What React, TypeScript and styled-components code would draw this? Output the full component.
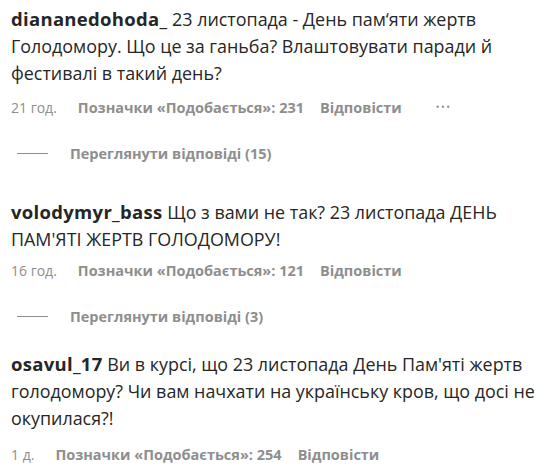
import styled, { createGlobalStyle } from "styled-components"

const GlobalStyle = createGlobalStyle`
  body {
    margin: 0;
    background: #ffffff;
    font-family: "Open Sans", "Noto Sans", sans-serif;
    color: #262626;
  }
`

type commentType = {
  id: number
  user: string
  text: string
  time: string
  likes: number
  replies?: number
  more?: boolean
  metaGap: number
  after: number
}

const comments: commentType[] = [
  {
    id: 1,
    user: "diananedohoda_",
    text: "23 листопада - День пам\u2018яти жертв Голодомору. Що це за ганьба? Влаштовувати паради й фестивалі в такий день?",
    time: "21 год.",
    likes: 231,
    replies: 15,
    more: true,
    metaGap: 10,
    after: 35,
  },
  {
    id: 2,
    user: "volodymyr_bass",
    text: "Що з вами не так? 23 листопада ДЕНЬ ПАМ'ЯТІ ЖЕРТВ ГОЛОДОМОРУ!",
    time: "16 год.",
    likes: 121,
    replies: 3,
    metaGap: 7,
    after: 24,
  },
  {
    id: 3,
    user: "osavul_17",
    text: "Ви в курсі, що 23 листопада День Пам'яті жертв голодомору? Чи вам начхати на українську кров, що досі не окупилася?!",
    time: "1 д.",
    likes: 254,
    metaGap: 12,
    after: 0,
  },
]

const App = () => {
  return (
    <>
      <GlobalStyle />
      <CommentList>
        {comments.map(comment => (
          <Comment key={comment.id} $after={comment.after}>
            <CommentText>
              <UserName>{comment.user}</UserName> {comment.text}
            </CommentText>
            <MetaRow $gap={comment.metaGap}>
              <Time>{comment.time}</Time>
              <MetaButton>Позначки «Подобається»: {comment.likes}</MetaButton>
              <MetaButton>Відповісти</MetaButton>
              {comment.more && <MoreDots>•••</MoreDots>}
            </MetaRow>
            {comment.replies && (
              <RepliesRow>
                <RepliesLine />
                <MetaButton>Переглянути відповіді ({comment.replies})</MetaButton>
              </RepliesRow>
            )}
          </Comment>
        ))}
      </CommentList>
    </>
  )
}

export default App

const CommentList = styled.div`
  width: 559px;
  display: flex;
  flex-direction: column;
  padding: 5px 0 0 11px;
  box-sizing: border-box;
`

const Comment = styled.div<{ $after: number }>`
  display: flex;
  flex-direction: column;
  margin-bottom: ${p => p.$after}px;
`

const CommentText = styled.div`
  font-size: 17.9px;
  line-height: 27px;
  width: 535px;
  color: #262626;
`

const UserName = styled.span`
  font-weight: 700;
  font-size: 18.5px;
  letter-spacing: 0.3px;
`

const MetaRow = styled.div<{ $gap: number }>`
  display: flex;
  align-items: center;
  gap: 16px;
  margin-top: ${p => p.$gap}px;
  height: 20px;
  color: #8e8e8e;
`

const Time = styled.span`
  font-size: 14px;
  font-weight: 400;
  margin-right: 5px;
`

const MetaButton = styled.span`
  font-size: 14.5px;
  font-weight: 700;
  color: #8e8e8e;
`

const MoreDots = styled.span`
  font-size: 10px;
  letter-spacing: 1.5px;
  margin-left: 18px;
  color: #8e8e8e;
`

const RepliesRow = styled.div`
  display: flex;
  align-items: center;
  gap: 22px;
  margin-top: 26px;
  padding-left: 6px;
  height: 20px;
`

const RepliesLine = styled.div`
  width: 31px;
  height: 1px;
  background: #8e8e8e;
`
